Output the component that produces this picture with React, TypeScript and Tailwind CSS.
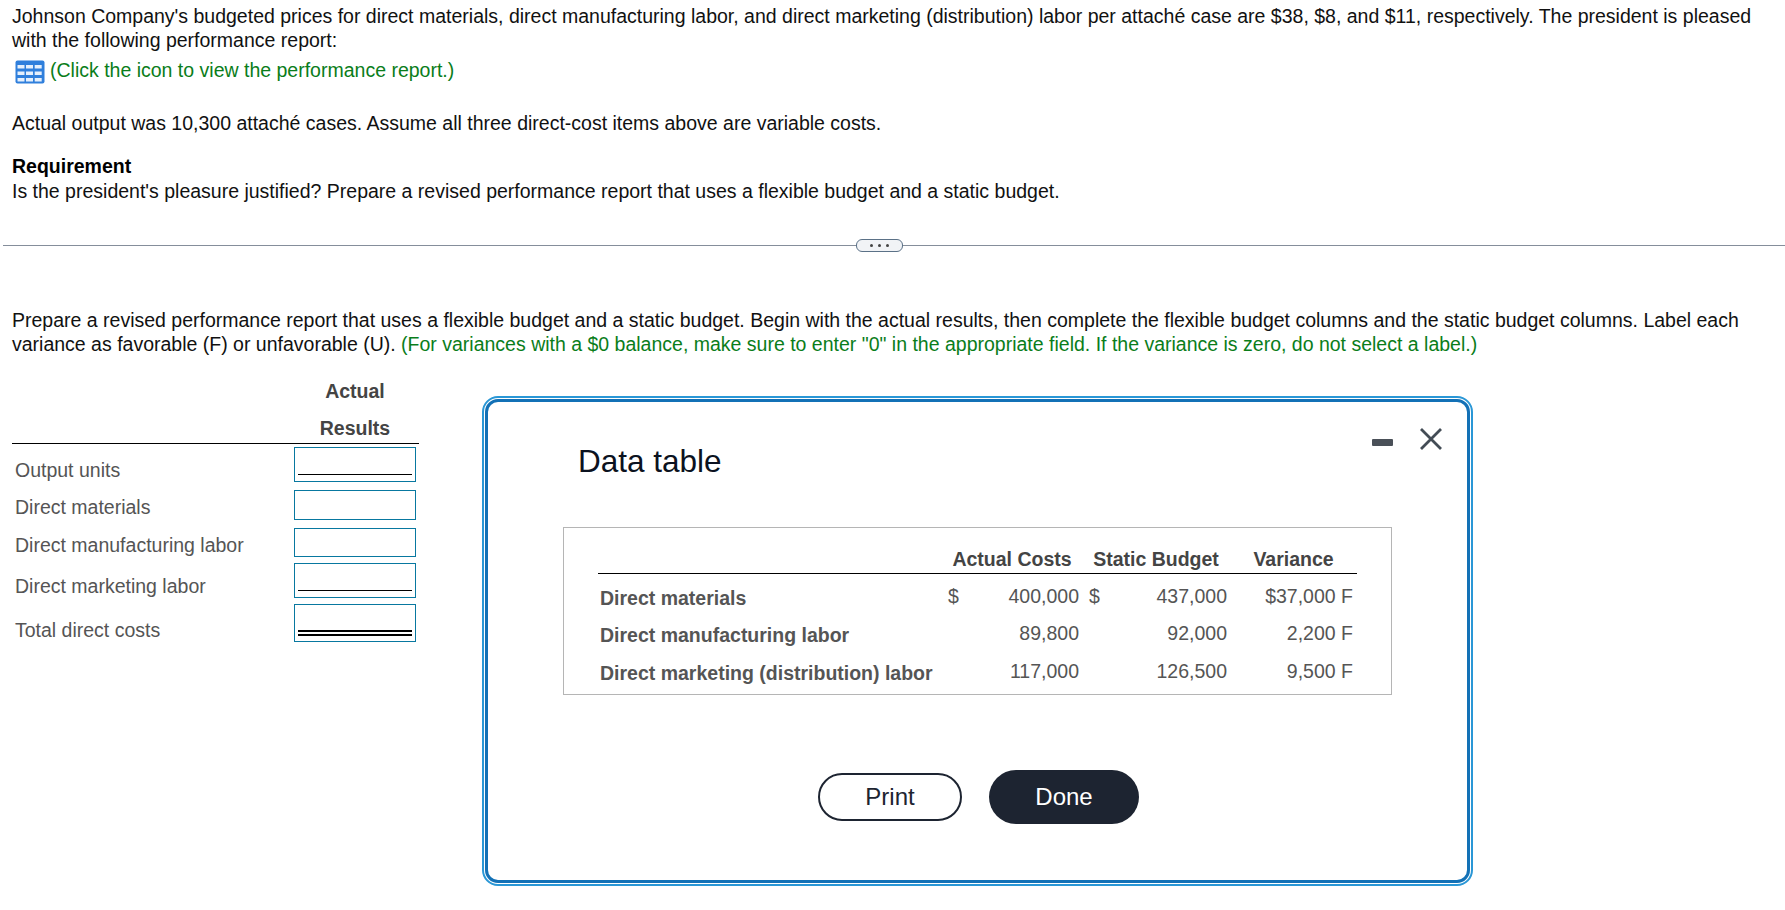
import React from 'react'

const rows = [
  { label: 'Output units', rowH: 'h-[43px]', boxH: 'h-[35px]', mark: 'single', labelTop: 'mt-[11px]' },
  { label: 'Direct materials', rowH: 'h-[38px]', boxH: 'h-[30px]', mark: 'none', labelTop: 'mt-[5px]' },
  { label: 'Direct manufacturing labor', rowH: 'h-[35px]', boxH: 'h-[29px]', mark: 'none', labelTop: 'mt-[5px]' },
  { label: 'Direct marketing labor', rowH: 'h-[41px]', boxH: 'h-[35px]', mark: 'single', labelTop: 'mt-[11px]' },
  { label: 'Total direct costs', rowH: 'h-[44px]', boxH: 'h-[38px]', mark: 'double', labelTop: 'mt-[14px]' },
]

const costs = [
  { label: 'Direct materials', actual: '400,000', budget: '437,000', variance: '$37,000 F', dollar: true },
  { label: 'Direct manufacturing labor', actual: '89,800', budget: '92,000', variance: '2,200 F', dollar: false },
  { label: 'Direct marketing (distribution) labor', actual: '117,000', budget: '126,500', variance: '9,500 F', dollar: false },
]

const TableIcon = () => (
  <svg width="30" height="24" viewBox="0 0 30 24" className="shrink-0 translate-y-[2px]">
    <rect x="0.5" y="0.5" width="29" height="23" rx="2" fill="#2f7fdc" />
    {[5, 11.5, 18].map((y) =>
      [2.5, 11, 19.7].map((x) => (
        <rect key={`${x}-${y}`} x={x} y={y} width="7" height="3.5" fill="#e6f0fc" />
      ))
    )}
  </svg>
)

const App: React.FC = () => {
  return (
    <div className="relative h-[910px] overflow-hidden bg-white pt-[4px] font-['Liberation_Sans',Arial,sans-serif] text-[19.5px] leading-[24px] text-[#111]">
      <p className="px-3">
        Johnson Company's budgeted prices for direct materials, direct manufacturing labor, and direct marketing
        (distribution) labor per attaché case are $38, $8, and $11, respectively. The president is pleased with the
        following performance report:
      </p>
      <div className="mt-[6px] flex items-center gap-[5px] pl-[15px] text-[#0a7d1a]">
        <TableIcon />
        <span>(Click the icon to view the performance report.)</span>
      </div>
      <p className="mt-[29px] px-3">Actual output was 10,300 attaché cases. Assume all three direct-cost items above are variable costs.</p>
      <p className="mt-[19px] px-3 font-bold text-black">Requirement</p>
      <p className="mt-px px-3">
        Is the president's pleasure justified? Prepare a revised performance report that uses a flexible budget and a
        static budget.
      </p>

      <div className="relative mt-[42px] ml-[3px] h-px bg-[#858e9b]">
        <div className="absolute top-[-6px] left-[853px] flex h-[13px] w-[47px] items-center justify-center gap-[5px] rounded-[6px] border border-[#5b7187] bg-[#f1f3f6]">
          <span className="h-[3px] w-[3px] rounded-full bg-[#444]" />
          <span className="h-[3px] w-[3px] rounded-full bg-[#444]" />
          <span className="h-[3px] w-[3px] rounded-full bg-[#444]" />
        </div>
      </div>

      <p className="mt-[62px] px-3">
        Prepare a revised performance report that uses a flexible budget and a static budget. Begin with the actual
        results, then complete the flexible budget columns and the static budget columns. Label each variance as
        favorable (F) or unfavorable (U).{' '}
        <span className="text-[#0a7d1a]">
          (For variances with a $0 balance, make sure to enter "0" in the appropriate field. If the variance is zero, do
          not select a label.)
        </span>
      </p>

      <div className="mt-[23px] ml-3 w-[407px] text-[#555]">
        <div className="border-b border-black pr-[3px] pl-[282px] text-center font-bold text-[#444]">
          <div className="h-[37px] leading-[24px]">Actual</div>
          <div className="h-[27px] leading-[24px]">Results</div>
        </div>
        <div className="pt-[3px]">
          {rows.map((row) => (
            <div key={row.label} className={`flex items-start ${row.rowH}`}>
              <div className={`w-[282px] pl-[3px] ${row.labelTop}`}>{row.label}</div>
              <div className={`relative w-[122px] border border-[#0878a0] ${row.boxH}`}>
                {row.mark === 'single' && <div className="absolute right-[3px] bottom-[6px] left-[3px] h-px bg-black" />}
                {row.mark === 'double' && (
                  <div className="absolute right-[3px] bottom-[5px] left-[3px] h-[6px] border-y-2 border-black" />
                )}
              </div>
            </div>
          ))}
        </div>
      </div>

      <div className="absolute top-[396px] left-[482px] h-[490px] w-[991px] rounded-[16px] border-2 border-[#2a97d6] bg-white p-px">
        <div className="relative h-full rounded-[13px] border-[3px] border-[#1371b6] pt-[41px] pl-[90px] text-[#333]">
          <h2 className="text-[31.5px] leading-[36px] text-[#0b1220]">Data table</h2>
          <button className="absolute top-[37px] right-[74px] h-[7px] w-[21px] rounded-[1px] bg-[#4a5058]" aria-label="Minimize" />
          <svg width="22" height="22" viewBox="0 0 22 22" className="absolute top-[26px] right-[25px]">
            <path d="M1 1 L21 21 M21 1 L1 21" stroke="#434c55" strokeWidth="2.8" fill="none" />
          </svg>

          <div className="mt-[48px] -ml-[15px] h-[168px] w-[829px] border border-[#b5b5b5] px-[34px] pt-[19px] text-[#555]">
            <div className="grid grid-cols-[347px_138px_144px_129px] border-b border-black pb-[2px] font-bold leading-[24px] text-[#444]">
              <div />
              <div className="pr-[4px] text-center">Actual Costs</div>
              <div className="pl-[2px] text-center">Static Budget</div>
              <div className="pl-[4px] text-center">Variance</div>
            </div>
            <div className="pt-[3px]">
              {costs.map((c) => (
                <div key={c.label} className="grid h-[37.5px] grid-cols-[347px_138px_144px_129px] items-center">
                  <div className="pt-[4px] pl-[2px] font-bold">{c.label}</div>
                  <div className="flex justify-between pr-[4px] pl-[3px]">
                    <span>{c.dollar ? '$' : ''}</span>
                    <span>{c.actual}</span>
                  </div>
                  <div className="flex justify-between pl-[6px]">
                    <span>{c.dollar ? '$' : ''}</span>
                    <span>{c.budget}</span>
                  </div>
                  <div className="pr-[3px] text-right">{c.variance}</div>
                </div>
              ))}
            </div>
          </div>

          <div className="mt-[75px] flex items-center gap-[27px] pl-[240px] text-[24px]">
            <button className="h-[48px] w-[144px] rounded-full border-2 border-[#1d2431] text-[#1d2431]">Print</button>
            <button className="h-[54px] w-[150px] rounded-full bg-[#1d2431] text-white">Done</button>
          </div>
        </div>
      </div>
    </div>
  )
}

export default App
